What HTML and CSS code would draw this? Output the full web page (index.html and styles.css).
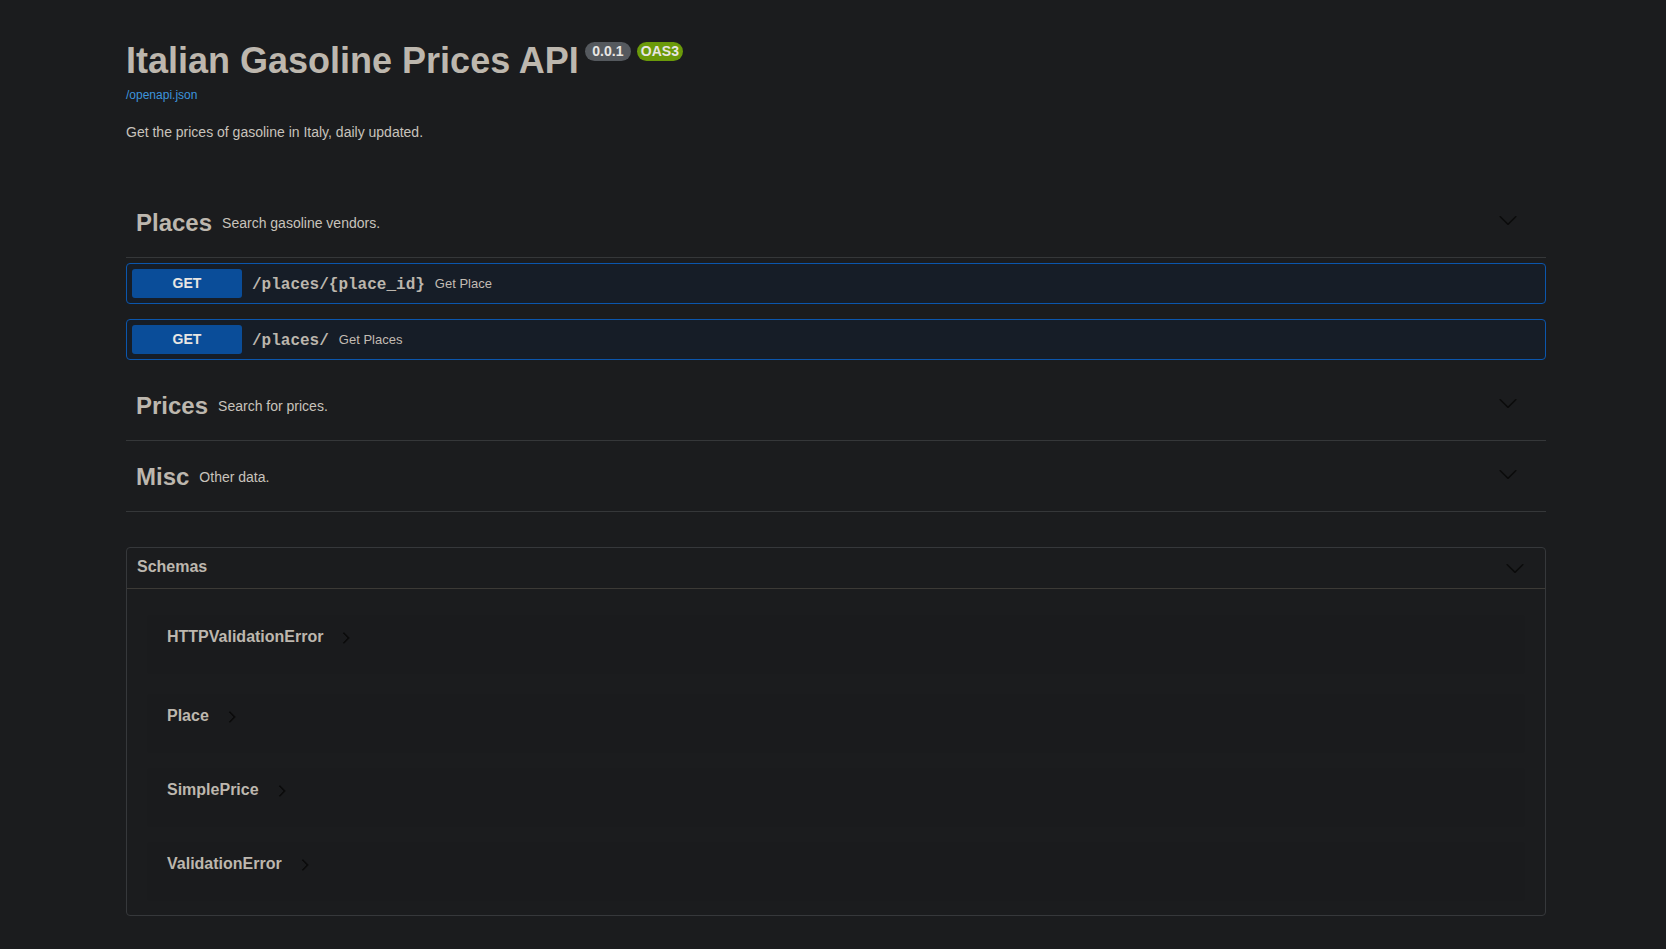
FILE: index.html
```html
<!DOCTYPE html>
<html lang="en">
<head>
<meta charset="utf-8">
<title>Italian Gasoline Prices API</title>
<link rel="stylesheet" href="styles.css">
</head>
<body>
<div class="wrapper">
  <div class="info">
    <hgroup class="main">
      <h2 class="title">Italian Gasoline Prices API<span class="badge version">0.0.1</span><span class="badge oas">OAS3</span></h2>
      <a class="url" href="#">/openapi.json</a>
    </hgroup>
    <p class="desc">Get the prices of gasoline in Italy, daily updated.</p>
  </div>

  <div class="tags">
    <div class="tag-section">
      <h3 class="tag">
        <span class="tag-name">Places</span>
        <small class="tag-desc">Search gasoline vendors.</small>
        <svg class="chev" width="20" height="20" viewBox="0 0 20 20"><path d="M17.418 6.109c.272-.268.709-.268.979 0s.271.701 0 .969l-7.908 7.83c-.27.268-.707.268-.979 0l-7.908-7.830c-.27-.268-.27-.701 0-.969.271-.268.709-.268.979 0L10 13.25l7.418-7.141z"/></svg>
      </h3>
      <div class="opblocks">
        <div class="opblock">
          <span class="method">GET</span>
          <span class="path">/places/{place_id}</span>
          <span class="summary">Get Place</span>
        </div>
        <div class="opblock">
          <span class="method">GET</span>
          <span class="path">/places/</span>
          <span class="summary">Get Places</span>
        </div>
      </div>
    </div>

    <div class="tag-section">
      <h3 class="tag">
        <span class="tag-name">Prices</span>
        <small class="tag-desc">Search for prices.</small>
        <svg class="chev" width="20" height="20" viewBox="0 0 20 20"><path d="M17.418 6.109c.272-.268.709-.268.979 0s.271.701 0 .969l-7.908 7.83c-.27.268-.707.268-.979 0l-7.908-7.830c-.27-.268-.27-.701 0-.969.271-.268.709-.268.979 0L10 13.25l7.418-7.141z"/></svg>
      </h3>
    </div>

    <div class="tag-section">
      <h3 class="tag">
        <span class="tag-name">Misc</span>
        <small class="tag-desc">Other data.</small>
        <svg class="chev" width="20" height="20" viewBox="0 0 20 20"><path d="M17.418 6.109c.272-.268.709-.268.979 0s.271.701 0 .969l-7.908 7.83c-.27.268-.707.268-.979 0l-7.908-7.830c-.27-.268-.27-.701 0-.969.271-.268.709-.268.979 0L10 13.25l7.418-7.141z"/></svg>
      </h3>
    </div>
  </div>

  <section class="models">
    <h4 class="models-head">
      <span>Schemas</span>
      <svg class="chev" width="20" height="20" viewBox="0 0 20 20"><path d="M17.418 6.109c.272-.268.709-.268.979 0s.271.701 0 .969l-7.908 7.83c-.27.268-.707.268-.979 0l-7.908-7.830c-.27-.268-.27-.701 0-.969.271-.268.709-.268.979 0L10 13.25l7.418-7.141z"/></svg>
    </h4>
    <div class="model-list">
      <div class="model"><span class="model-title">HTTPValidationError</span><svg class="arrow" width="12" height="12" viewBox="0 0 20 20"><path d="M13.25 10L6.109 2.58c-.268-.272-.268-.709 0-.979.268-.27.701-.27.969 0l7.83 7.908c.268.271.268.709 0 .979l-7.83 7.908c-.268.271-.701.27-.969 0-.268-.269-.268-.707 0-.979L13.25 10z"/></svg></div>
      <div class="model"><span class="model-title">Place</span><svg class="arrow" width="12" height="12" viewBox="0 0 20 20"><path d="M13.25 10L6.109 2.58c-.268-.272-.268-.709 0-.979.268-.27.701-.27.969 0l7.83 7.908c.268.271.268.709 0 .979l-7.83 7.908c-.268.271-.701.27-.969 0-.268-.269-.268-.707 0-.979L13.25 10z"/></svg></div>
      <div class="model"><span class="model-title">SimplePrice</span><svg class="arrow" width="12" height="12" viewBox="0 0 20 20"><path d="M13.25 10L6.109 2.58c-.268-.272-.268-.709 0-.979.268-.27.701-.27.969 0l7.83 7.908c.268.271.268.709 0 .979l-7.83 7.908c-.268.271-.701.27-.969 0-.268-.269-.268-.707 0-.979L13.25 10z"/></svg></div>
      <div class="model"><span class="model-title">ValidationError</span><svg class="arrow" width="12" height="12" viewBox="0 0 20 20"><path d="M13.25 10L6.109 2.58c-.268-.272-.268-.709 0-.979.268-.27.701-.27.969 0l7.83 7.908c.268.271.268.709 0 .979l-7.83 7.908c-.268.271-.701.27-.969 0-.268-.269-.268-.707 0-.979L13.25 10z"/></svg></div>
    </div>
  </section>
</div>
</body>
</html>
```

FILE: styles.css
```css
* { box-sizing: border-box; }

html, body {
  margin: 0;
  padding: 0;
  background: #1b1c1e;
  font-family: "Liberation Sans", Arial, sans-serif;
  color: #bdb7ae;
}

.wrapper {
  width: 1420px;
  margin-left: 126px;
  padding-bottom: 34px;
}

/* ---------- info ---------- */
.info {
  padding-top: 41px;
}

.main {
  margin: 0;
}

.title {
  display: flex;
  align-items: flex-start;
  margin: 0;
  font-size: 36px;
  line-height: 40px;
  font-weight: 700;
  color: #bdb7ae;
}

.badge {
  display: inline-block;
  margin-top: 1px;
  margin-left: 6px;
  height: 19px;
  line-height: 19px;
  border-radius: 57px;
  font-size: 14px;
  font-weight: 700;
  color: #e8e6e3;
}

.version {
  background: #55595e;
  padding: 0 7px;
  min-width: 46px;
  text-align: center;
}

.oas {
  background: #6b9a0a;
  padding: 0 4px;
}

.url {
  display: block;
  margin-top: 7px;
  font-size: 12px;
  line-height: 14px;
  color: #3d94dc;
  text-decoration: none;
}

.desc {
  margin: 22px 0 0;
  font-size: 14px;
  line-height: 16px;
  color: #c8c3bc;
}

/* ---------- tags ---------- */
.tags {
  margin-top: 47px;
}

.tag {
  display: flex;
  align-items: center;
  height: 71px;
  margin: 0;
  padding: 2px 20px 0 10px;
  border-bottom: 1px solid #353739;
}

.tag-name {
  font-size: 24px;
  font-weight: 700;
  color: #bdb7ae;
}

.tag-desc {
  flex: 1;
  padding-left: 10px;
  font-size: 14px;
  font-weight: 400;
  color: #c8c3bc;
}

.chev {
  margin: 0 8px 6px 0;
  fill: #0b0b0b;
}

/* ---------- operations ---------- */
.opblocks {
  display: flex;
  flex-direction: column;
  gap: 15px;
  padding: 5px 0 10px;
}

.opblock {
  display: flex;
  align-items: center;
  height: 41px;
  padding: 0 5px;
  border: 1px solid #0b56ad;
  border-radius: 4px;
  background: #161d27;
}

.method {
  width: 110px;
  height: 29px;
  line-height: 29px;
  text-align: center;
  border-radius: 3px;
  background: #0a4d99;
  color: #e8e6e3;
  font-size: 14px;
  font-weight: 700;
}

.path {
  padding: 0 10px;
  font-family: "Liberation Mono", "Courier New", monospace;
  font-size: 16px;
  font-weight: 700;
  color: #bcb6ad;
  position: relative;
  top: 1px;
}

.summary {
  font-size: 13px;
  color: #c2bcb3;
}

/* ---------- models ---------- */
.models {
  margin-top: 35px;
  border: 1px solid #36383b;
  border-radius: 4px;
}

.models-head {
  display: flex;
  align-items: center;
  justify-content: space-between;
  height: 41px;
  margin: 0;
  padding: 0 20px 2px 10px;
  border-bottom: 1px solid #3c3a36;
  font-size: 16px;
  font-weight: 700;
  color: #bdb7ae;
}

.models-head .chev {
  margin: 2px 0 0 0;
}

.model-list {
  display: flex;
  flex-direction: column;
  gap: 15px;
  padding: 26px 20px 14px;
}

.model-list .model:first-child {
  margin-bottom: 5px;
}

.model {
  display: flex;
  align-items: flex-start;
  height: 59px;
  padding: 12px 20px;
  border-radius: 4px;
  background: rgba(0, 0, 0, 0.03);
}

.model-title {
  font-size: 16px;
  line-height: 20px;
  font-weight: 700;
  color: #bdb7ae;
}

.arrow {
  margin: 5px 0 0 17px;
  fill: #0b0b0b;
  stroke: #0b0b0b;
  stroke-width: 1.6;
}
```
